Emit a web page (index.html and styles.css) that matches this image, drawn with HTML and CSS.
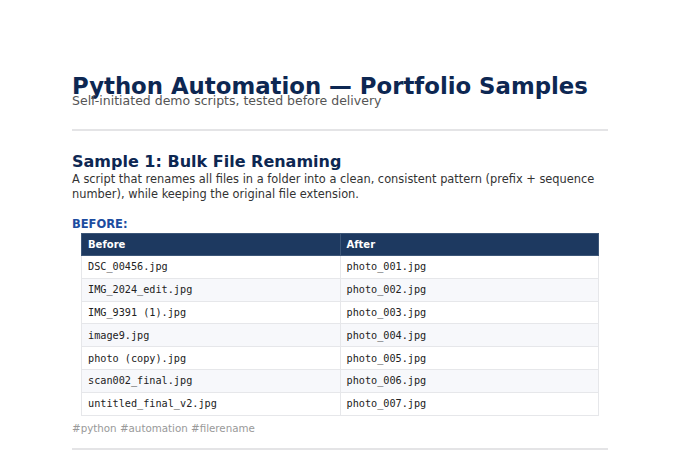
FILE: index.html
```html
<!DOCTYPE html>
<html lang="en">
<head>
    <meta charset="UTF-8">
    <meta name="viewport" content="width=device-width, initial-scale=1.0">
    <title>Python Automation Portfolio</title>
    <link rel="stylesheet" href="styles.css">
</head>
<body>
    <div class="page">
        <header class="intro">
            <h1 class="title">Python Automation — Portfolio Samples</h1>
            <p class="subtitle">Self-initiated demo scripts, tested before delivery</p>
        </header>
        <hr class="rule">

        <section class="sample">
            <h2 class="sample-title">Sample 1: Bulk File Renaming</h2>
            <p class="sample-desc">A script that renames all files in a folder into a clean, consistent pattern (prefix + sequence number), while keeping the original file extension.</p>
            <div class="label">BEFORE:</div>
            <table class="files">
                <thead>
                    <tr><th>Before</th><th>After</th></tr>
                </thead>
                <tbody>
                    <tr><td>DSC_00456.jpg</td><td>photo_001.jpg</td></tr>
                    <tr><td>IMG_2024_edit.jpg</td><td>photo_002.jpg</td></tr>
                    <tr><td>IMG_9391 (1).jpg</td><td>photo_003.jpg</td></tr>
                    <tr><td>image9.jpg</td><td>photo_004.jpg</td></tr>
                    <tr><td>photo (copy).jpg</td><td>photo_005.jpg</td></tr>
                    <tr><td>scan002_final.jpg</td><td>photo_006.jpg</td></tr>
                    <tr><td>untitled_final_v2.jpg</td><td>photo_007.jpg</td></tr>
                </tbody>
            </table>
            <div class="tags">#python #automation #filerename</div>
        </section>
        <hr class="rule rule-end">
    </div>
</body>
</html>
```

FILE: styles.css
```css
body {
    margin: 0;
    background: #ffffff;
    font-family: "DejaVu Sans", Verdana, sans-serif;
    color: #333;
}
.page {
    width: 536px;
    margin: 0 auto;
    padding-top: 75px;
}
.title {
    margin: 0 0 -5px;
    font-size: 22.8px;
    line-height: 23px;
    font-weight: bold;
    color: #0d2752;
}
.subtitle {
    margin: 0;
    font-size: 12.5px;
    color: #555;
}
.rule {
    margin: 21px 0 0;
    border: 0;
    border-top: 2px solid #e4e4e6;
}
.rule-end {
    margin-top: 14px;
}
.sample {
    padding-top: 21px;
}
.sample-title {
    margin: 0;
    font-size: 16px;
    color: #0d2752;
}
.sample-desc {
    margin: 1px 0 0;
    font-size: 11.4px;
    line-height: 15px;
    color: #333;
}
.label {
    margin-top: 15px;
    font-size: 11.5px;
    font-weight: bold;
    color: #1c4ca0;
}
.files {
    width: 518px;
    margin: 2px 9px 0;
    border-collapse: collapse;
    table-layout: fixed;
    font-size: 10px;
}
.files th {
    background: #1d3960;
    color: #fff;
    text-align: left;
    padding: 5px 6px;
    border: 1px solid #3c5678;
    font-weight: bold;
}
.files td {
    font-family: "DejaVu Sans Mono", monospace;
    font-size: 10.2px;
    color: #222;
    padding: 5px 6px;
    height: 11.8px;
    border: 1px solid #e6e7ea;
}
.files tbody tr:nth-child(even) td {
    background: #f7f8fb;
}
.tags {
    margin-top: 6px;
    font-size: 10.3px;
    color: #999;
}
```
